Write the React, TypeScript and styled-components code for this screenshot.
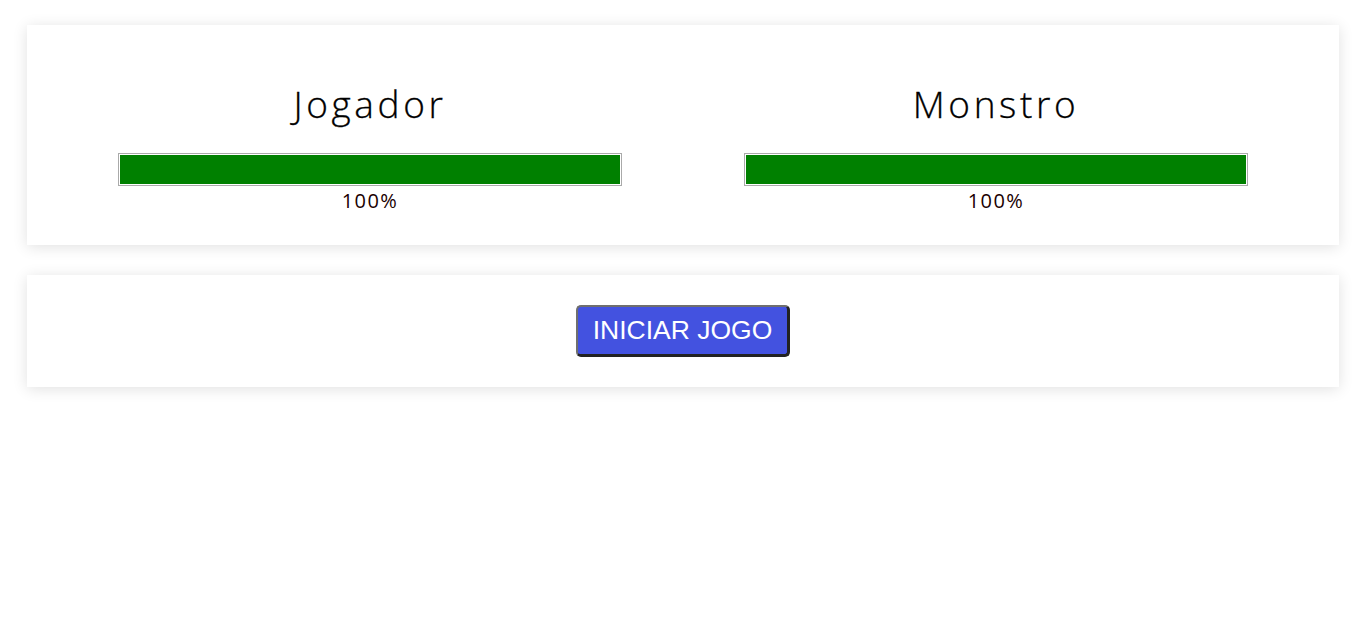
import React from "react";
import styled, { createGlobalStyle } from "styled-components";

const Global = createGlobalStyle`
  html, body { margin: 0; padding: 0; background: #fff; }
  body { font-family: "Open Sans", sans-serif; }
`;

const Page = styled.div`
  padding: 25px 27px;
  display: flex;
  flex-direction: column;
  gap: 30px;
`;

const Panel = styled.section`
  background: #fff;
  box-shadow: 0 2px 14px rgba(0, 0, 0, 0.12);
  padding: 30px;
`;

const Players = styled.div`
  display: flex;
`;

const Player = styled.div`
  flex: 1;
  display: flex;
  flex-direction: column;
  align-items: center;
`;

const Name = styled.h1`
  margin: 27px 0 28px;
  font-family: "Open Sans", sans-serif;
  font-weight: 300;
  font-size: 37px;
  line-height: 43px;
  letter-spacing: 3.6px;
  color: #000;
  -webkit-text-stroke: 0.3px #000;
`;

const Bar = styled.div`
  width: 504px;
  height: 33px;
  box-sizing: border-box;
  border: 1px solid #aaa;
  padding: 1px;
  background: #fff;
`;

const Fill = styled.div`
  height: 100%;
  background: #008000;
`;

const Percent = styled.div`
  margin: 3px 0 2px;
  font-family: "Open Sans", sans-serif;
  font-weight: 400;
  font-size: 20px;
  line-height: 24px;
  letter-spacing: 1.4px;
  color: #1a0000;
`;

const Actions = styled.div`
  display: flex;
  justify-content: center;
`;

const StartButton = styled.button`
  height: 52px;
  width: 214px;
  box-sizing: border-box;
  background: #4352e0;
  color: #fff;
  font-family: "Liberation Sans", Arial, sans-serif;
  font-size: 26.5px;
  border-radius: 5px;
  border-width: 2px 3px 3px 2px;
  border-style: solid;
  border-color: #6f6f6f #222 #222 #6f6f6f;
  padding: 0;
  cursor: pointer;
`;

const players = [
  { name: "Jogador", life: 100 },
  { name: "Monstro", life: 100 },
];

export default function App() {
  return (
    <>
      <Global />
      <Page>
        <Panel>
          <Players>
            {players.map((p) => (
              <Player key={p.name}>
                <Name>{p.name}</Name>
                <Bar>
                  <Fill style={{ width: `${p.life}%` }} />
                </Bar>
                <Percent>{p.life}%</Percent>
              </Player>
            ))}
          </Players>
        </Panel>
        <Panel>
          <Actions>
            <StartButton>INICIAR JOGO</StartButton>
          </Actions>
        </Panel>
      </Page>
    </>
  );
}
